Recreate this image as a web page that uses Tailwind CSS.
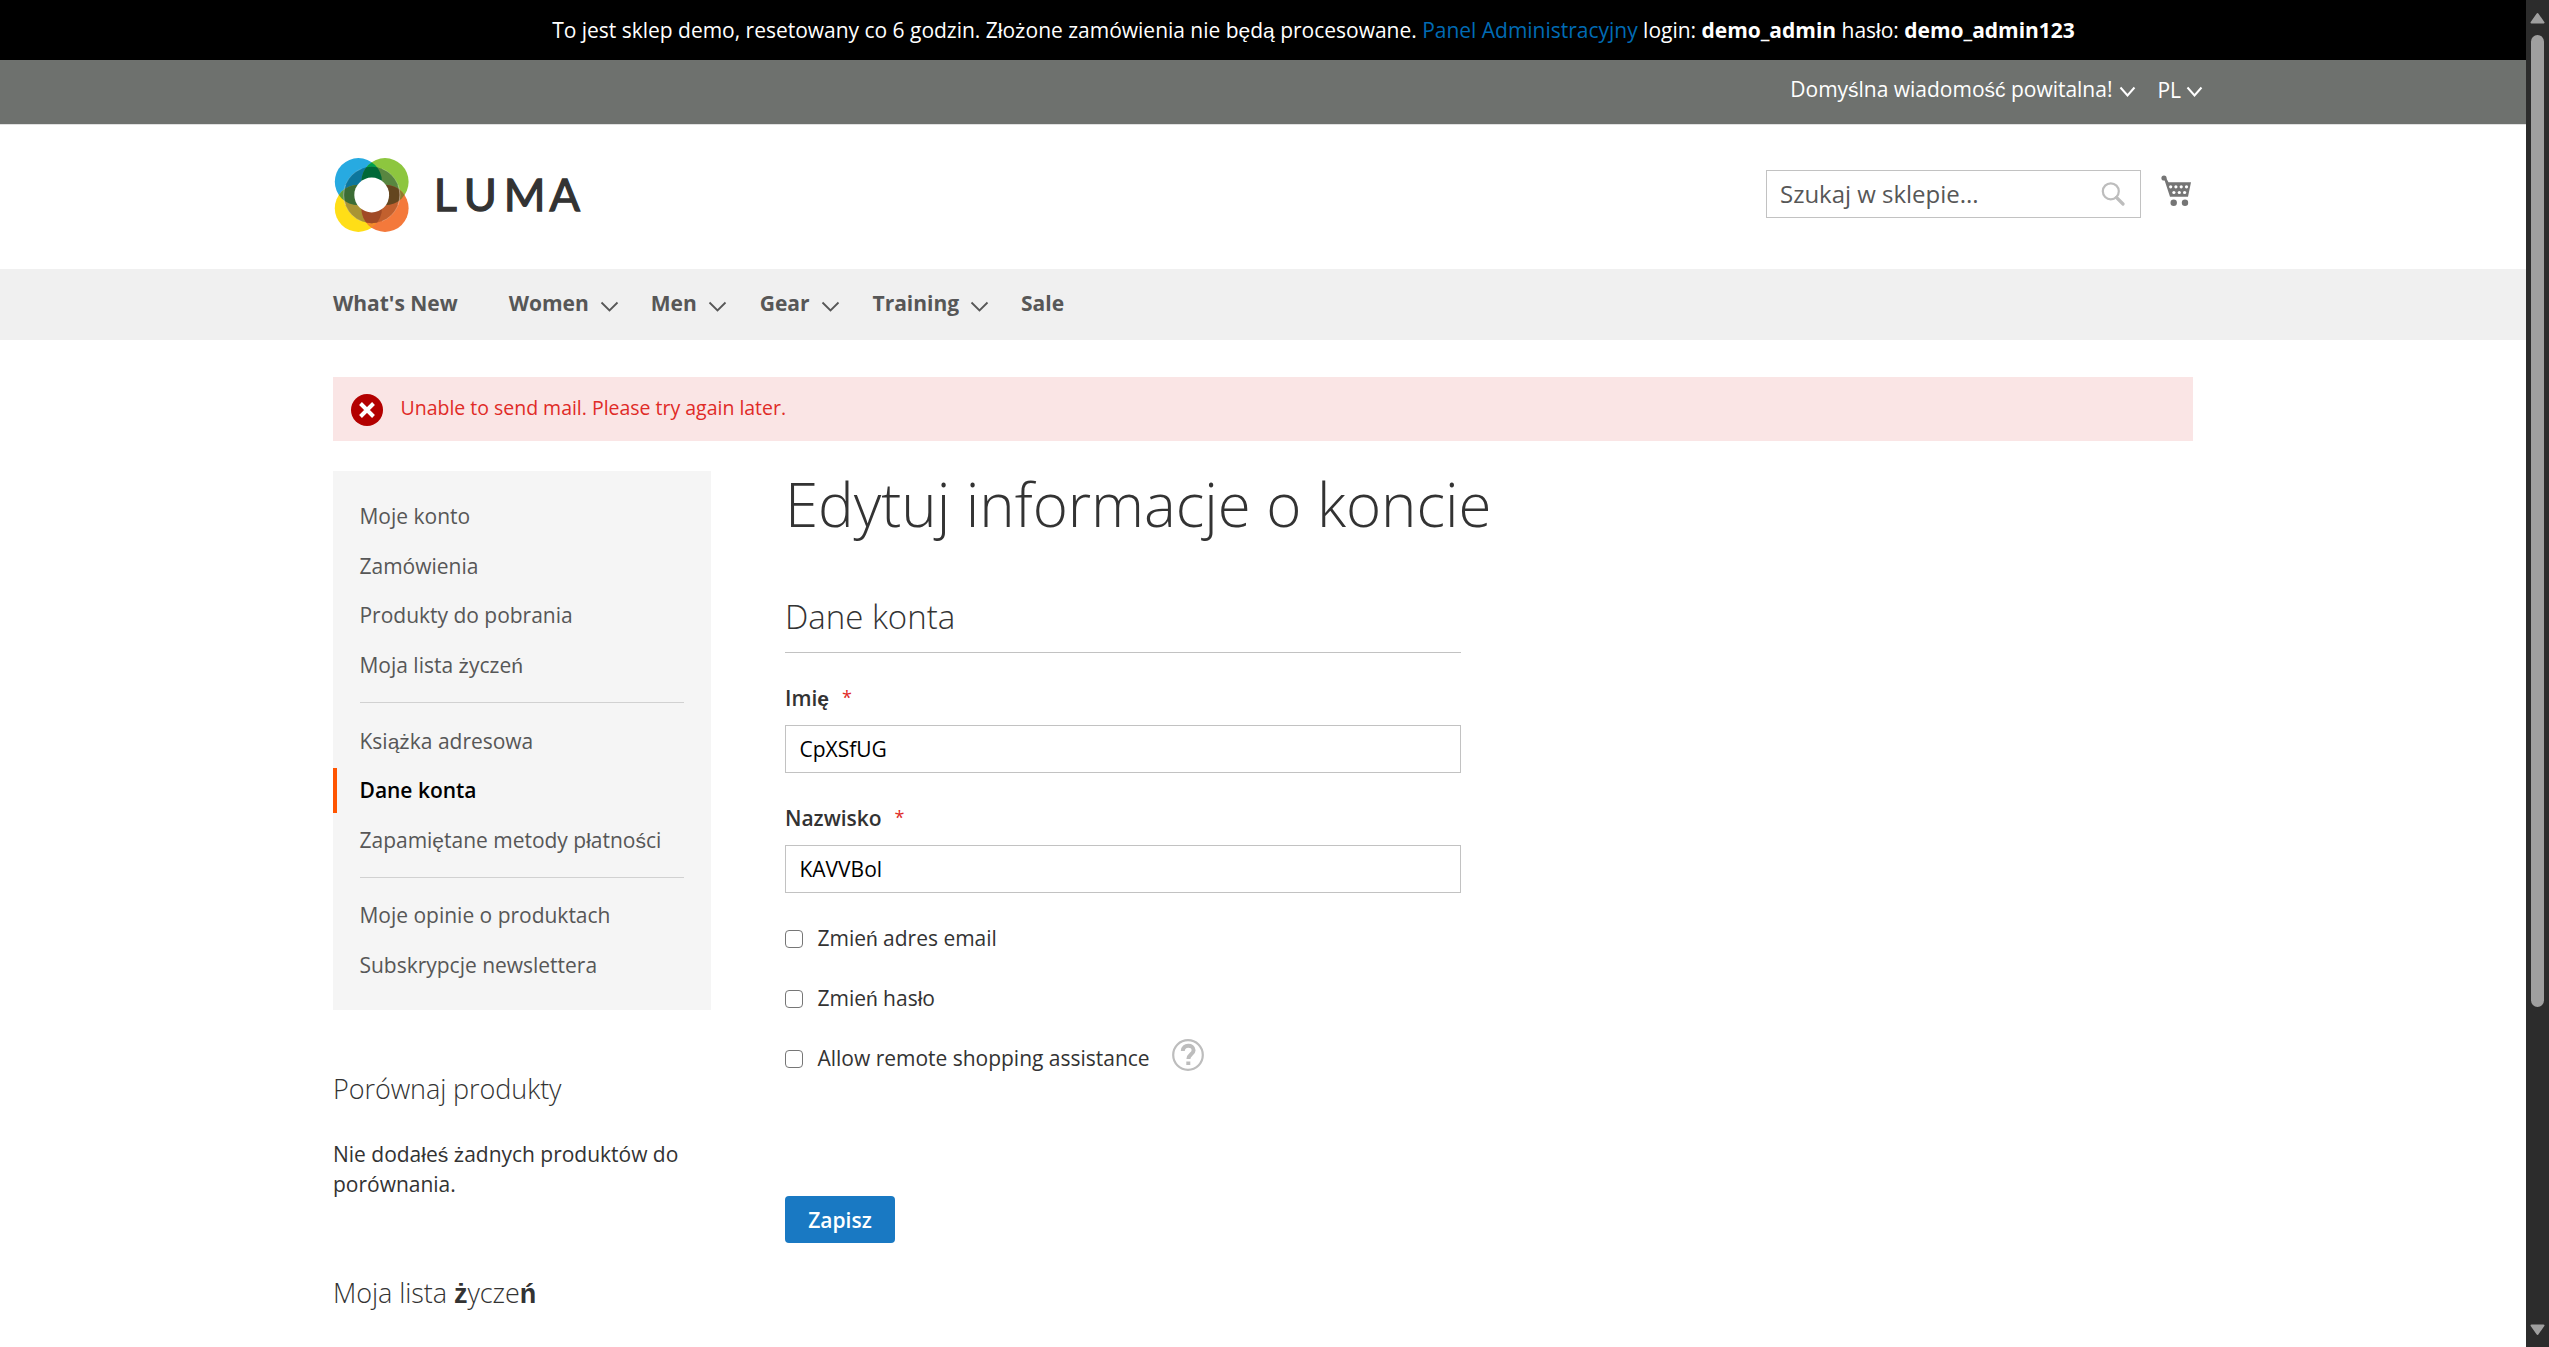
<!DOCTYPE html>
<html lang="pl">
<head>
<meta charset="utf-8">
<title>Edytuj informacje o koncie</title>
<script src="https://cdn.jsdelivr.net/npm/@tailwindcss/browser@4"></script>
</head>
<!-- <i> marks letters set in the fallback face -->
<body class="flex h-[1347px] overflow-hidden bg-white font-['Open_Sans',sans-serif] text-[21px] leading-[30px] tracking-[-0.015px] text-[#333] [&_i]:font-['Liberation_Sans',sans-serif] [&_i]:leading-none [&_i]:not-italic">
<div class="h-full w-[2526px] overflow-hidden">
  <div class="flex h-[60px] items-center justify-center bg-black pl-[101px] text-white">
    <p class="whitespace-nowrap">To jest sklep demo, resetowany co 6 godzin. Z<i>ł</i>o<i>ż</i>one zamówienia nie b<i>ę</i>d<i>ą</i> procesowane. <a class="text-[#006bb4]">Panel Administracyjny</a> login: <b class="font-bold">demo_admin</b> has<i>ł</i>o: <b class="font-bold">demo_admin123</b></p>
  </div>
  <header>
    <div class="h-[65px] border-b border-[#e0e0e0] bg-[#6e716e]">
      <div class="mx-auto flex h-[58px] w-[1860px] items-center justify-end text-white">
        <span class="whitespace-nowrap">Domy<i>ś</i>lna wiadomo<i>ść</i> powitalna!</span>
        <svg class="mt-[6px] ml-[7px] h-3 w-[17px]" viewBox="0 0 17 12" fill="none" stroke="currentColor" stroke-width="2"><path d="M1.5 1.5 8.5 9.5 15.5 1.5"/></svg>
        <span class="mt-[1px] ml-[21px]">PL</span>
        <svg class="mt-[5px] -mr-[10px] ml-[5px] h-3 w-[17px]" viewBox="0 0 17 12" fill="none" stroke="currentColor" stroke-width="2"><path d="M1.5 1.5 8.5 9.5 15.5 1.5"/></svg>
      </div>
    </div>
    <div class="mx-auto flex h-36 w-[1860px] pt-[32px]">
      <svg class="h-20 w-[260px]" viewBox="0 0 260 80">
        <defs>
          <clipPath id="b"><circle cx="25.4" cy="24.7" r="23.6"/></clipPath>
          <clipPath id="g"><circle cx="52" cy="24.7" r="23.6"/></clipPath>
          <clipPath id="y"><circle cx="25.4" cy="51.3" r="23.6"/></clipPath>
          <clipPath id="o"><circle cx="52" cy="51.3" r="23.6"/></clipPath>
          <clipPath id="m"><circle cx="38.7" cy="38" r="28.2"/></clipPath>
        </defs>
        <circle cx="25.4" cy="24.7" r="23.6" fill="#27aae1"/>
        <circle cx="52" cy="24.7" r="23.6" fill="#8dc63f"/>
        <circle cx="25.4" cy="51.3" r="23.6" fill="#ffde17"/>
        <circle cx="52" cy="51.3" r="23.6" fill="#f4793b"/>
        <g clip-path="url(#b)"><circle cx="52" cy="24.7" r="23.6" fill="#00a14b"/><circle cx="25.4" cy="51.3" r="23.6" fill="#5f9b3c"/></g>
        <g clip-path="url(#o)"><circle cx="52" cy="24.7" r="23.6" fill="#8f7a2b"/><circle cx="25.4" cy="51.3" r="23.6" fill="#f58a2a"/></g>
        <g clip-path="url(#m)">
          <circle cx="25.4" cy="24.7" r="23.6" fill="#0c769c"/>
          <circle cx="52" cy="24.7" r="23.6" fill="#588640"/>
          <circle cx="25.4" cy="51.3" r="23.6" fill="#a99434"/>
          <circle cx="52" cy="51.3" r="23.6" fill="#c2602e"/>
          <g clip-path="url(#b)"><circle cx="52" cy="24.7" r="23.6" fill="#006838"/><circle cx="25.4" cy="51.3" r="23.6" fill="#3b6c35"/></g>
          <g clip-path="url(#o)"><circle cx="52" cy="24.7" r="23.6" fill="#64461f"/><circle cx="25.4" cy="51.3" r="23.6" fill="#a14a26"/></g>
        </g>
        <g fill="none" stroke="#fff" stroke-opacity=".35" stroke-width=".6">
          <path d="M12.5 48A28.2 28.2 0 0 1 28.6 11.7M65 48A28.2 28.2 0 0 0 49 11.7M12.5 28A28.2 28.2 0 0 0 28.6 64.3M65 28A28.2 28.2 0 0 1 49 64.3"/>
        </g>
        <circle cx="38.7" cy="38" r="17.4" fill="#fff"/>
        <text x="100.8 130.8 170.8 216.5" y="53.700" font-family="Lato" font-weight="400" font-size="45" fill="#333" stroke="#333" stroke-width="1.3">LUMA</text>
      </svg>
      <div class="mt-[13px] ml-auto flex h-12 w-[375px] items-center justify-between border border-[#c2c2c2] pr-[15px] pl-[13px] text-2xl text-[#575757]">
        <span>Szukaj w sklepie...</span>
        <svg class="h-6 w-6" viewBox="0 0 24 24" fill="none" stroke="#bdbdbd"><circle cx="9.8" cy="9.3" r="8" stroke-width="2.2"/><path d="M15.5 15.5 22 22" stroke-width="3.2" stroke-linecap="round"/></svg>
      </div>
      <svg class="mt-[18px] mr-[1px] ml-5 h-8 w-[31px]" viewBox="0 0 31 32">
        <g fill="#757575"><circle cx="3" cy="3" r="2.6"/><path d="M4 1 7.5 7.2H30L27 21.8H9L3 3.5Z"/><circle cx="12.7" cy="27.8" r="3.2"/><circle cx="24" cy="27.8" r="3.2"/></g>
        <g fill="#fff"><circle cx="9.7" cy="11.8" r="1.6"/><circle cx="14.9" cy="11.8" r="1.6"/><circle cx="20.2" cy="11.8" r="1.6"/><circle cx="25.5" cy="11.8" r="1.6"/><circle cx="12.9" cy="17.5" r="1.6"/><circle cx="18.3" cy="17.5" r="1.6"/><circle cx="23.6" cy="17.5" r="1.6"/></g>
      </svg>
    </div>
    <nav class="h-[71px] bg-[#f0f0f0] font-bold text-[#575757]">
      <ul class="mx-auto flex h-[68px] w-[1860px] items-center [&_svg]:mt-[6px] [&_svg]:ml-[11px] [&_svg]:h-[11px] [&_svg]:w-[19px] [&>li]:flex [&>li]:items-center">
        <li class="mr-[51px]">What's New</li>
        <li class="mr-[32px]">Women<svg viewBox="0 0 19 11" fill="none" stroke="currentColor" stroke-width="1.8"><path d="M1.5 1.5 9.5 9.5 17.5 1.5"/></svg></li>
        <li class="mr-[33px]">Men<svg viewBox="0 0 19 11" fill="none" stroke="currentColor" stroke-width="1.8"><path d="M1.5 1.5 9.5 9.5 17.5 1.5"/></svg></li>
        <li class="mr-[33px]">Gear<svg viewBox="0 0 19 11" fill="none" stroke="currentColor" stroke-width="1.8"><path d="M1.5 1.5 9.5 9.5 17.5 1.5"/></svg></li>
        <li class="mr-[32px]">Training<svg viewBox="0 0 19 11" fill="none" stroke="currentColor" stroke-width="1.8"><path d="M1.5 1.5 9.5 9.5 17.5 1.5"/></svg></li>
        <li>Sale</li>
      </ul>
    </nav>
  </header>
  <main class="mx-auto w-[1860px] pt-[37px]">
    <div class="flex h-16 items-center bg-[#fae5e5] pl-[18px] text-[19.5px] text-[#e02b27]">
      <svg class="mt-[2px] mr-[17.5px] h-8 w-8" viewBox="0 0 32 32"><circle cx="16" cy="16" r="16" fill="#b30000"/><path d="m9.5 9.5 13 13m0-13-13 13" stroke="#fff" stroke-width="4"/></svg>
      <span class="-mt-[2px]">Unable to send mail. Please try again later.</span>
    </div>
    <div class="flex pt-[30px]">
      <aside class="w-[378px] shrink-0">
        <ul class="h-[539px] bg-[#f5f5f5] pt-[23px] text-[#575757] [&>li]:mb-[4.5px] [&>li]:h-[45px] [&>li]:pl-[26.5px] [&>li]:leading-[45px]">
          <li>Moje konto</li>
          <li>Zamówienia</li>
          <li>Produkty do pobrania</li>
          <li>Moja lista <i>ż</i>ycze<i>ń</i></li>
          <hr class="mx-[27px] mt-[14.5px] mb-[15.5px] border-[#d1d1d1]">
          <li>Ksi<i>ąż</i>ka adresowa</li>
          <li class="border-l-4 border-[#ff5501] pl-[22.5px]! font-semibold text-black">Dane konta</li>
          <li>Zapami<i>ę</i>tane metody p<i>ł</i>atno<i>ś</i>ci</li>
          <hr class="mx-[27px] mt-[14px] mb-[15.5px] border-[#d1d1d1]">
          <li>Moje opinie o produktach</li>
          <li>Subskrypcje newslettera</li>
        </ul>
        <h3 class="mt-[64px] h-[30px] text-[27px] leading-[30px] font-light tracking-[-0.08px]">Porównaj produkty</h3>
        <p class="mt-[35px]">Nie doda<i>ł</i>e<i>ś</i> <i>ż</i>adnych produktów do porównania.</p>
        <h3 class="mt-[79px] text-[27px] leading-[30px] font-light tracking-[-0.06px]">Moja lista <i class="font-bold">ż</i>ycze<i class="font-bold">ń</i></h3>
      </aside>
      <section class="ml-[74px] w-[720px]">
        <h1 class="h-[67px] text-[60px] leading-[67px] font-light tracking-[-0.04px] whitespace-nowrap">Edytuj informacje o koncie</h1>
        <form class="w-[676px]">
          <h2 class="mt-[57px] h-[58px] border-b border-[#c2c2c2] text-[33px] leading-[44px] font-light">Dane konta</h2>
          <label class="mt-[30px] flex h-[30px] gap-[13px] font-semibold"><span>Imi<i>ę</i></span><span class="text-lg font-normal text-[#e02b27]">*</span></label>
          <div class="mt-[12px] flex h-12 items-center border border-[#c2c2c2] pl-[13.5px] text-black">CpXSfUG</div>
          <label class="mt-[30px] flex h-[30px] gap-[13px] font-semibold"><span>Nazwisko</span><span class="text-lg font-normal text-[#e02b27]">*</span></label>
          <div class="mt-[12px] flex h-12 items-center border border-[#c2c2c2] pl-[13.5px] text-black">KAVVBol</div>
          <div class="mt-[30px] flex h-[30px] items-center"><span class="mt-[1px] mr-[14.5px] size-[18px] rounded-[4px] border-[1.5px] border-[#767676]"></span><span>Zmie<i>ń</i> adres email</span></div>
          <div class="mt-[30px] flex h-[30px] items-center"><span class="mt-[1px] mr-[14.5px] size-[18px] rounded-[4px] border-[1.5px] border-[#767676]"></span><span>Zmie<i>ń</i> has<i>ł</i>o</span></div>
          <div class="mt-[30px] flex h-[30px] items-center"><span class="mt-[1px] mr-[14.5px] size-[18px] rounded-[4px] border-[1.5px] border-[#767676]"></span><span>Allow remote shopping assistance</span>
            <svg class="-mt-[6px] ml-[22px] h-8 w-8" viewBox="0 0 32 32" fill="none" stroke="#bdbdbd"><circle cx="16" cy="16" r="14.8" stroke-width="2.2"/><path d="M10.8 12c0-7 10.8-7 10.8-.8 0 4-5.2 4.200-5.200 8.700" stroke-width="4"/><path d="M14.300 22.500h4v3.500h-4z" fill="#bdbdbd" stroke="none"/></svg>
          </div>
          <button class="mt-[123px] flex h-[47px] w-[110px] items-center justify-center rounded-[4px] bg-[#1979c3] font-semibold text-white">Zapisz</button>
        </form>
      </section>
    </div>
  </main>
</div>
<div class="flex h-full w-[23px] flex-col items-center bg-[#2c2c2c]">
  <svg class="mt-3 h-3 w-[15px]" viewBox="0 0 15 12"><path d="M7.500 2 13.500 10.500H1.500Z" fill="#9f9f9f" stroke="#9f9f9f" stroke-width="2" stroke-linejoin="round"/></svg>
  <div class="mt-[11px] h-[972px] w-[13px] rounded-full bg-[#9f9f9f]"></div>
  <svg class="mt-auto mb-[11px] h-3 w-[15px]" viewBox="0 0 15 12"><path d="M7.500 10 13.500 1.500H1.500Z" fill="#9f9f9f" stroke="#9f9f9f" stroke-width="2" stroke-linejoin="round"/></svg>
</div>
</body>
</html>
